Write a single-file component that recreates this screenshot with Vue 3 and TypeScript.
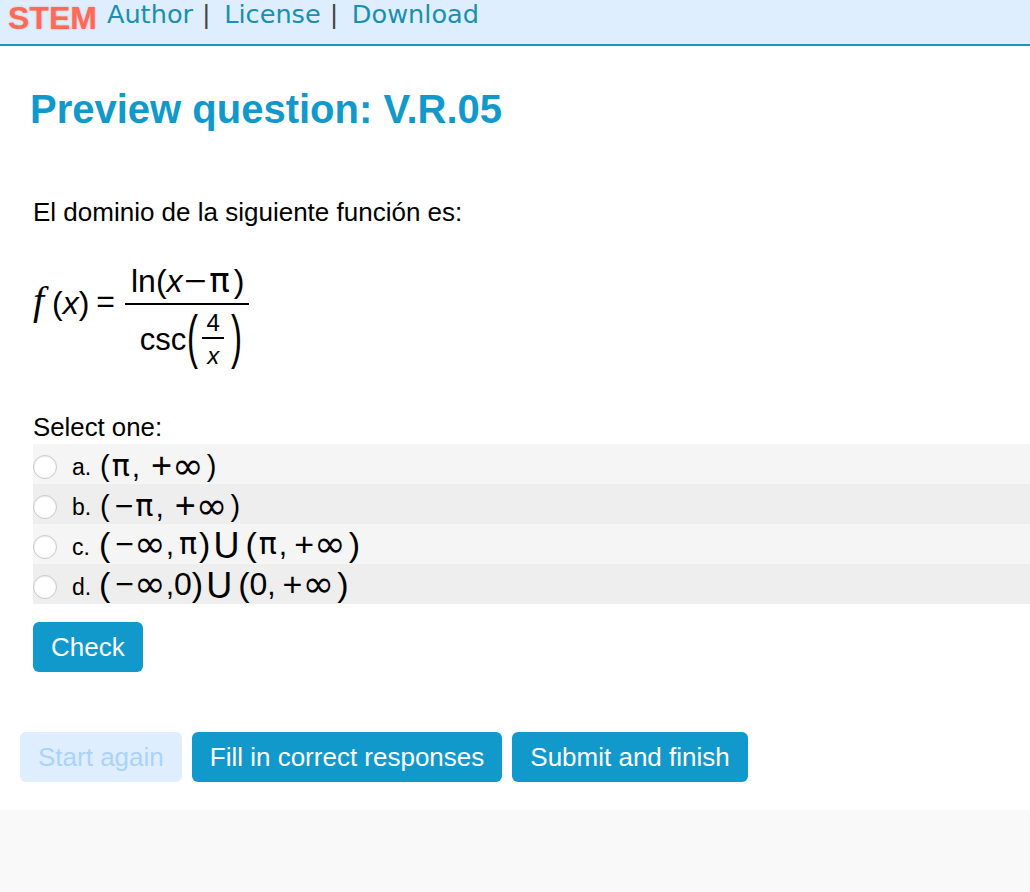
<script setup lang="ts">
const navLinks = ['Author', 'License', 'Download']

const tokenClass: Record<string, string> = {
  '(': 'paren',
  ')': 'paren',
  '−': 'minus',
  '∞': 'inf',
  'π': 'pi',
  ',': 'comma',
  '+': 'plus',
  'U': 'cup',
  '0': 'zero'
}

const options = [
  { letter: 'a.', size: 'short', value: '(π,+∞)' },
  { letter: 'b.', size: 'short', value: '(−π,+∞)' },
  { letter: 'c.', size: 'tall', value: '(−∞,π)U(π,+∞)' },
  { letter: 'd.', size: 'tall', value: '(−∞,0)U(0,+∞)' }
]

const actions = [
  { label: 'Start again', disabled: true },
  { label: 'Fill in correct responses', disabled: false },
  { label: 'Submit and finish', disabled: false }
]
</script>

<template>
  <div class="page">
    <header class="nav">
      <span class="brand">STEM</span>
      <template v-for="(link, i) in navLinks" :key="link">
        <span v-if="i > 0" class="sep">|</span>
        <a class="nav-link" href="#">{{ link }}</a>
      </template>
    </header>

    <main class="content">
      <h1 class="title">Preview question: V.R.05</h1>
      <p class="prompt">El dominio de la siguiente función es:</p>

      <div class="formula">
        <span class="fx"><i class="fn">f</i>(<i>x</i>)</span>
        <span class="eq">=</span>
        <span class="frac">
          <span class="frac-top">ln(<i>x</i><span class="frac-minus">−</span><span class="frac-pi">π</span>)</span>
          <span class="frac-bottom">
            <span class="csc">csc</span>
            <span class="big-paren">(</span>
            <span class="inner-frac">
              <span class="inner-top">4</span>
              <i class="inner-bottom">x</i>
            </span>
            <span class="big-paren">)</span>
          </span>
        </span>
      </div>

      <p class="select">Select one:</p>
      <div class="options">
        <label v-for="(opt, i) in options" :key="opt.letter" class="option" :class="i % 2 ? 'even' : 'odd'">
          <span class="radio"></span>
          <span class="letter">{{ opt.letter }}</span>
          <span class="answer" :class="opt.size">
            <span v-for="(ch, j) in opt.value" :key="j" :class="tokenClass[ch]">{{ ch }}</span>
          </span>
        </label>
      </div>

      <button class="btn check" type="button">Check</button>

      <div class="actions">
        <button
          v-for="action in actions"
          :key="action.label"
          class="btn"
          :class="{ disabled: action.disabled }"
          type="button"
        >
          {{ action.label }}
        </button>
      </div>
    </main>

    <footer class="footer"></footer>
  </div>
</template>

<style>
html,
body {
  margin: 0;
  background: #fff;
}
</style>

<style scoped>
.page {
  display: flex;
  flex-direction: column;
  height: 892px;
  overflow: hidden;
  font-family: "Liberation Sans", Arial, sans-serif;
  color: #000;
}

.nav {
  display: flex;
  align-items: flex-start;
  height: 44px;
  padding-left: 8px;
  background: #deeeff;
  border-bottom: 2px solid #1b95b8;
  font-family: "DejaVu Sans", Verdana, sans-serif;
  font-size: 25.6px;
  line-height: 28px;
}

.brand {
  margin: 2px 10px 0 0;
  font-family: "Liberation Sans", Arial, sans-serif;
  font-weight: 700;
  font-size: 32px;
  line-height: 32px;
  color: #ff6a58;
  text-shadow: 0 0 2px rgba(255, 106, 88, 0.6);
}

.nav-link {
  color: #1b8fb0;
  text-decoration: none;
}

.sep {
  margin: 0 13.5px 0 9px;
  color: #444;
}

.content {
  flex: 1;
  padding-left: 33px;
}

.title {
  margin: 40px 0 0 -3px;
  font-size: 40px;
  line-height: 46px;
  font-weight: 700;
  color: #1199cc;
}

.prompt {
  margin: 65px 0 0;
  font-size: 26px;
  line-height: 30px;
}

.formula {
  display: flex;
  align-items: flex-start;
  margin-top: 34px;
  height: 151px;
  font-size: 32px;
}

.fx {
  margin-top: 22px;
  line-height: 36px;
  white-space: nowrap;
}

.fn {
  display: inline-block;
  width: 19px;
  font-family: "Liberation Serif", serif;
  font-size: 40px;
  line-height: 36px;
}

.eq {
  margin: 22px 10px 0 7px;
  line-height: 36px;
}

.frac {
  display: inline-flex;
  flex-direction: column;
  width: 124px;
}

.frac-top {
  height: 42px;
  padding-left: 6px;
  line-height: 40px;
  border-bottom: 2px solid #000;
  white-space: nowrap;
}

.frac-minus {
  display: inline-block;
  margin: 0 5px 0 3px;
  transform: scaleX(1.2);
}

.frac-pi {
  margin-right: 4px;
  font-family: "DejaVu Sans", sans-serif;
  font-size: 34px;
  line-height: 34px;
}

.frac-bottom {
  display: flex;
  align-items: flex-start;
  justify-content: center;
  height: 64px;
  padding-left: 10px;
}

.csc {
  margin-top: 23px;
  font-size: 31px;
  line-height: 24px;
}

.big-paren {
  font-size: 60px;
  line-height: 64px;
  width: 14px;
  transform: translateX(1px) scaleX(0.55);
  transform-origin: left center;
}

.inner-frac {
  display: flex;
  flex-direction: column;
  align-items: center;
  width: 22px;
  margin: 0 6px 0 2px;
  font-size: 24px;
}

.inner-top {
  width: 100%;
  height: 34px;
  line-height: 36px;
  text-align: center;
  border-bottom: 2px solid #000;
  box-sizing: border-box;
}

.inner-bottom {
  line-height: 34px;
}

.select {
  margin: 0;
  font-size: 25.8px;
  line-height: 30px;
}

.options {
  margin-top: 2px;
}

.option {
  display: flex;
  align-items: center;
  height: 40px;
  font-size: 23px;
}

.option.odd {
  background: #f5f5f5;
}

.option.even {
  background: #eeeeee;
}

.radio {
  width: 22px;
  height: 22px;
  margin: 6px 15px 0 0;
  border: 1px solid #c8c8c8;
  border-radius: 50%;
  background: #fff;
  box-shadow: inset 0 1px 2px rgba(0, 0, 0, 0.08);
  flex: none;
}

.letter {
  width: 28px;
  margin-top: 6px;
}

.answer {
  display: flex;
  align-items: center;
  height: 40px;
  font-size: 32px;
  line-height: 40px;
  white-space: nowrap;
}

.answer.short {
  margin-top: 4px;
}

.answer.tall {
  margin-left: -1px;
}

.answer > span {
  display: block;
}

.answer.tall .paren {
  font-size: 34px;
}

.answer.short .paren {
  font-size: 29px;
}

.answer .paren:last-child {
  margin-left: 3px;
}

.inf {
  font-family: "DejaVu Sans", sans-serif;
  font-size: 38px;
}

.pi {
  font-family: "DejaVu Sans", sans-serif;
  font-size: 30px;
  margin: 0 2px;
}

.answer.tall .pi:nth-child(5) {
  margin-left: 5px;
}

.answer .minus {
  margin: 0 0 0 5px;
}

.answer .plus {
  font-size: 36px;
  margin-left: 11px;
}

.answer .comma {
  font-size: 30px;
  margin-top: 2px;
}

.answer.tall .plus {
  font-size: 34px;
  margin-left: 7px;
}

.cup {
  font-size: 36px;
  margin: 3px 6px 0 3px;
}

.btn {
  height: 50px;
  padding: 0 18px;
  border: 0;
  border-radius: 6px;
  background: #1199cc;
  color: #fff;
  font-family: inherit;
  font-size: 26px;
}

.btn.disabled {
  background: #deeeff;
  color: #aad2ff;
}

.check {
  display: block;
  margin-top: 18px;
}

.actions {
  display: flex;
  gap: 10px;
  margin: 60px 0 0 -13px;
}

.footer {
  flex: none;
  height: 82px;
  background: #f9f9f9;
}
</style>
